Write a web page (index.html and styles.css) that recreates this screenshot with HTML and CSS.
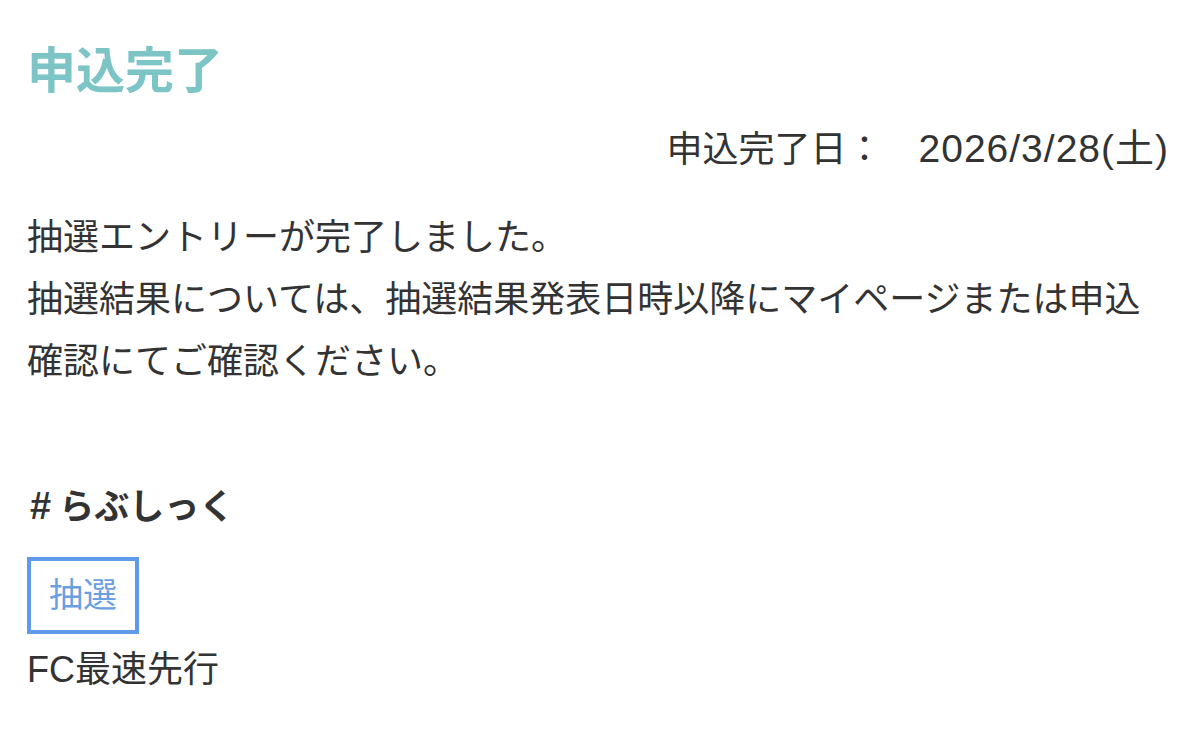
FILE: index.html
```html
<!DOCTYPE html>
<html lang="ja">

<head>
    <meta charset="UTF-8">
    <meta name="viewport" content="width=device-width, initial-scale=1.0">
    <title>申込完了</title>
    <link rel="stylesheet" href="styles.css">
</head>

<body>
    <main class="page">
        <h1 class="page-title">申込完了</h1>

        <p class="complete-date">
            <span class="complete-date-label">申込完了日：</span>
            <span class="complete-date-value">2026/3/28(土)</span>
        </p>

        <div class="message">
            <p>抽選エントリーが完了しました。</p>
            <p>抽選結果については、抽選結果発表日時以降にマイページまたは申込確認にてご確認ください。</p>
        </div>

        <section class="entry">
            <h2 class="entry-name"><span class="hash">#</span>らぶしっく</h2>
            <span class="entry-type">抽選</span>
            <p class="entry-round">FC最速先行</p>
        </section>
    </main>
</body>

</html>
```

FILE: styles.css
```css
body {
    margin: 0;
    background: #fff;
    color: #333;
    font-family: "Liberation Sans", "Noto Sans CJK JP", sans-serif;
}

.page {
    padding: 0 32px 0 27px;
}

.page-title {
    margin: 41px 0 0;
    font-size: 49px;
    line-height: 60px;
    font-weight: bold;
    color: #7cc4c6;
}

.complete-date {
    margin: 23px 0 0;
    font-size: 36px;
    line-height: 50px;
    text-align: right;
}

.complete-date-label {
    margin-right: 26px;
}

.complete-date-value {
    font-size: 39px;
    letter-spacing: 1px;
    margin-right: -1px;
}

.message {
    margin-top: 32px;
    font-size: 36px;
    line-height: 62px;
}

.message p {
    margin: 0;
}

.entry {
    margin-top: 88px;
    display: flex;
    flex-direction: column;
    align-items: flex-start;
}

.entry-name {
    margin: 0 0 0 3px;
    font-size: 35px;
    line-height: 50px;
    font-weight: bold;
}

.hash {
    font-size: 38px;
    margin-right: 8px;
}

.entry-type {
    margin-top: 25px;
    padding: 12px 18px;
    border: 4px solid #5f9bea;
    color: #6a9fe2;
    font-size: 34px;
    line-height: 45px;
}

.entry-round {
    margin: 11px 0 0;
    font-size: 36px;
    line-height: 50px;
}
```
